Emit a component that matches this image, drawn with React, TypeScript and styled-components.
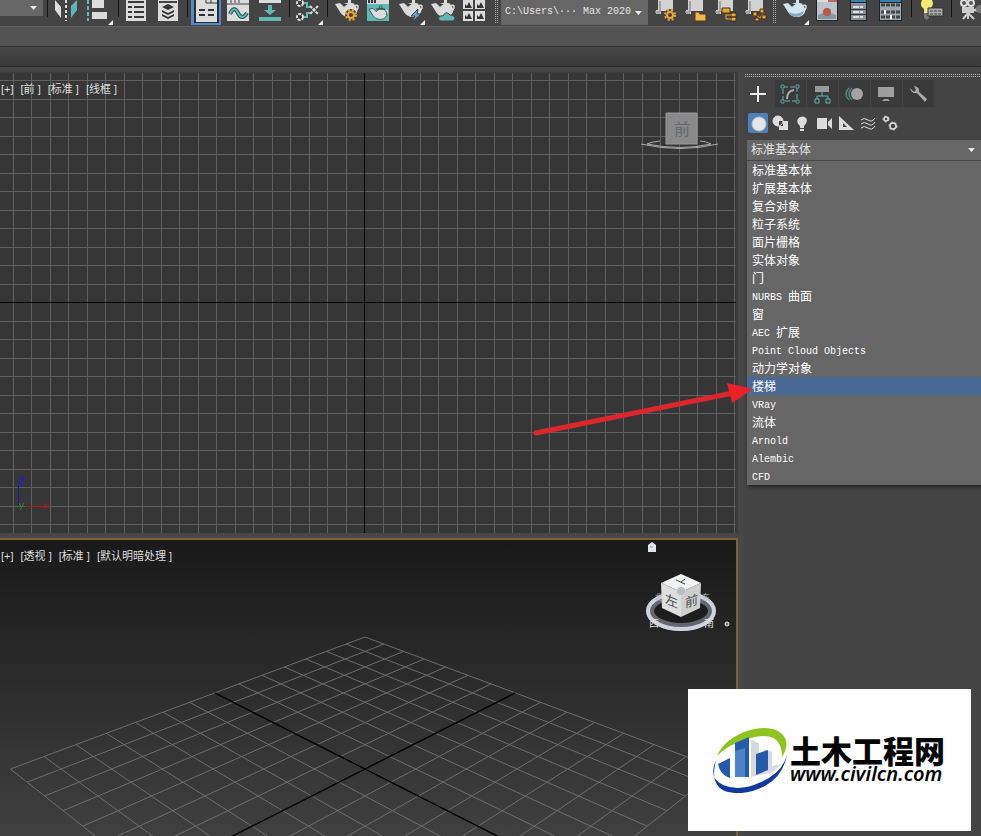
import React from 'react';
import styled, { createGlobalStyle } from 'styled-components';

const CJK = '"Noto Sans CJK SC", sans-serif';
const LIGHT = '#dcdcdc';
const TEAL = '#5fb8b4';
const GOLD = '#e8a838';

const Global = createGlobalStyle`
  *, *::before, *::after { box-sizing: border-box; }
  body { margin: 0; background: #444; color: #e4e4e4; font: 12px/18px "Liberation Sans", ${CJK}; overflow: hidden; }
  button, select { font: inherit; color: inherit; border: 0; margin: 0; padding: 0; background: none; border-radius: 0; }
  svg { display: block; }
`;

const Shell = styled.div`
  display: flex;
  flex-direction: column;
  height: 100vh;
  position: relative;
  overflow: hidden;
`;

const Toolbar = styled.header`
  display: flex;
  height: 26px;
  background: #444;
  overflow: hidden;
`;

const Tool = styled.button<{ $w: number }>`
  flex: 0 0 ${(p) => p.$w}px;
  height: 26px;
`;

const Separator = styled.span<{ $w: number }>`
  flex: 0 0 ${(p) => p.$w}px;
  display: flex;
  justify-content: center;
  &::before { content: ''; width: 1px; height: 17px; background: #151515; }
`;

const Grip = styled.span<{ $w: number }>`
  flex: 0 0 ${(p) => p.$w}px;
  display: flex;
  justify-content: center;
  &::before {
    content: '';
    width: 4px;
    height: 24px;
    background: conic-gradient(#a8a8a8 25%, transparent 0) 0 0 / 2px 2px;
  }
`;

const Combo = styled.label<{ $w?: number; $h: number; $mono?: boolean }>`
  position: relative;
  display: block;
  flex: ${(p) => (p.$w ? `0 0 ${p.$w}px` : '1 1 auto')};
  height: ${(p) => p.$h}px;
  background: #666;
  select {
    appearance: none;
    width: 100%;
    height: 100%;
    padding: 0 14px 2px 4px;
    outline: none;
    font-family: ${(p) => (p.$mono ? `"Liberation Mono", ${CJK}` : CJK)};
    font-size: ${(p) => (p.$mono ? 10 : 12)}px;
  }
  svg { position: absolute; right: 6px; top: calc(50% - 3px); pointer-events: none; }
`;

const Ribbon = styled.div`
  height: 21px;
  background: #535353;
  border-top: 1px solid #626262;
  border-bottom: 1px solid #2e2e2e;
`;
const SubRibbon = styled.div`
  height: 20px;
  background: linear-gradient(#474747, #3b3b3b);
  border-bottom: 1px solid #282828;
`;

const Workspace = styled.main`
  flex: 1;
  min-height: 0;
  display: grid;
  grid-template-columns: minmax(0, 1fr) 238px;
  column-gap: 5px;
  padding-top: 5px;
  background: #474747;
`;

const Views = styled.div`
  display: flex;
  flex-direction: column;
  gap: 5px;
  min-height: 0;
`;

const View = styled.section<{ $active?: boolean }>`
  position: relative;
  flex: ${(p) => (p.$active ? '1 1 0' : '0 0 461px')};
  min-height: 0;
  overflow: hidden;
  background: ${(p) => (p.$active ? 'linear-gradient(#191919, #404040)' : '#363636')};
  border-right: 2px solid ${(p) => (p.$active ? '#7c6132' : '#3c3c3c')};
  border-top: ${(p) => (p.$active ? '2px solid #7c6132' : '1px solid #3c3c3c')};
  > svg { width: 100%; height: 100%; }
`;

const ViewLabels = styled.nav`
  position: absolute;
  top: 7px;
  left: 1px;
  display: flex;
  gap: 7px;
  button { font: 11px/18px "Liberation Sans", ${CJK}; white-space: pre; color: #ddd; }
`;

const Cube = styled.div`
  position: absolute;
  top: 0;
  right: 0;
`;

const Panel = styled.aside`
  background: #444;
  display: flex;
  flex-direction: column;
  min-width: 0;
`;

const PanelGrip = styled.div`
  height: 4px;
  margin: 2px 0 2px 1px;
  background: conic-gradient(#b8b8b8 25%, transparent 0) 0 0 / 2px 2px;
`;

const Tabs = styled.div`
  display: flex;
  gap: 1px;
  height: 28px;
`;

const Tab = styled.button<{ $on?: boolean }>`
  width: 31px;
  height: 27px;
  background: ${(p) => (p.$on ? '#444' : '#3a3a3a')};
  display: grid;
  place-items: center;
`;

const Categories = styled.div`
  display: flex;
  gap: 2px;
  padding: 5px 0 0 5px;
  height: 32px;
`;

const Category = styled.button<{ $on?: boolean }>`
  width: 20px;
  height: 20px;
  border-radius: 2px;
  background: ${(p) => (p.$on ? '#5080b8' : 'transparent')};
`;

const Picker = styled.div`
  position: relative;
  display: flex;
  margin-left: 4px;
  border-bottom: 1px solid #484848;
`;

const Menu = styled.ul`
  position: absolute;
  z-index: 2;
  top: 100%;
  left: 0;
  right: 0;
  margin: 1px 0 0;
  padding: 0;
  list-style: none;
  background: #666;
  box-shadow: 1px 2px 3px #222;
`;

const MenuItem = styled.li<{ $on?: boolean }>`
  position: relative;
  background: ${(p) => (p.$on ? '#486a94' : 'transparent')};
  button {
    display: block;
    width: 100%;
    height: 18px;
    padding-left: 5px;
    text-align: left;
    font: 12px/18px ${CJK};
    color: #fff;
    white-space: pre;
  }
`;

const Latin = styled.span`
  font: 10px/14px "Liberation Mono", monospace;
  vertical-align: 1px;
`;

const Pointer = styled.svg`
  position: absolute;
  right: calc(100% - 8px);
  top: 0;
  pointer-events: none;
`;

const Watermark = styled.a`
  position: absolute;
  z-index: 3;
  right: 10px;
  bottom: 5px;
  width: 283px;
  height: 142px;
  display: flex;
  align-items: center;
  padding-left: 25px;
  gap: 2px;
  background: #fff;
  color: #050505;
  text-decoration: none;
`;

const Brand = styled.span`
  display: flex;
  flex-direction: column;
  strong { font: 900 31px/28px ${CJK}; white-space: nowrap; }
  em { font: italic 600 20px/20px "Noto Sans", sans-serif; }
`;

const Chevron = () => (
  <svg width="7" height="6"><path d="M0 1h7L3.500 5z" fill="#eee" /></svg>
);

const Teapot = ({ x = 0, y = 0, fill = LIGHT, stroke = 'none' }: { x?: number; y?: number; fill?: string; stroke?: string }) => (
  <g transform={`translate(${x} ${y})`} stroke={stroke}>
    <path d="M19 6q5-2 4 2-1 3-4 4" fill="none" stroke={fill} strokeWidth="1.500" />
    <path d="M0 4l5-1 4 4q2-2 4-3h6q4 4 3 8-2 5-8 5-6 0-9-5z" fill={fill} />
    <path d="M9 4q5-3 11 0zM13 0h3v3h-3z" fill={fill} />
  </g>
);

const Corner = ({ x = 28 }: { x?: number }) => <path d={`M${x} 20v5h-5z`} fill="#eee" />;

const Gear = ({ x, y, r = 4, color = GOLD }: { x: number; y: number; r?: number; color?: string }) => (
  <g fill="none" stroke={color}>
    <circle cx={x} cy={y} r={r + 1} strokeWidth="2" strokeDasharray="2 2" />
    <circle cx={x} cy={y} r={r - 1} strokeWidth="2" />
  </g>
);

const Cog = ({ x, y, r }: { x: number; y: number; r: number }) => (
  <g fill="none" stroke="#ddd">
    <circle cx={x} cy={y} r={r} strokeWidth="1.500" />
    <circle cx={x} cy={y} r={r + 1} strokeWidth="1" strokeDasharray="2 2" />
  </g>
);

const Scroll = () => (
  <g>
    <path d="M8 0h15v11H11v3H6v-4h2z" fill="#d2d2d2" />
    <path d="M5 11h5v3H7q-2-1-2-3z" fill="#a6a6a6" />
    <path d="M10 1v11" stroke="#777" />
  </g>
);

type ToolDef = { k: string; w: number; label?: string; art?: React.ReactNode };

const TOOLS_LEFT: ToolDef[] = [
  { k: 'sep', w: 9 },
  { k: 'tool', w: 32, label: '镜像', art: <><path d="M3 0l6 7v11L3 10z" fill="#ddd" /><path d="M25 0v10l-6 8V6z" fill={TEAL} /><path d="M14 0v21" stroke="#ddd" strokeWidth="2" strokeDasharray="3 2" /></> },
  { k: 'tool', w: 30, label: '对齐', art: <><path d="M4 0v21" stroke={TEAL} strokeWidth="2" strokeDasharray="4 2" /><path d="M8 0h12v8H8zM8 12h15v7H8z" fill={LIGHT} /><Corner x={29} /></> },
  { k: 'sep', w: 8 },
  { k: 'tool', w: 32, label: '场景资源管理器', art: <><path d="M4 0h20v21H4z" fill={LIGHT} /><path d="M6 2h16M6 7h4m2 0h10M6 12h4m2 0h10M6 17h4m2 0h10" stroke="#383838" strokeWidth="2" /></> },
  { k: 'tool', w: 30, label: '层资源管理器', art: <><path d="M4 0h20v21H4z" fill={LIGHT} /><path d="M5 2h18" stroke="#444" strokeWidth="2" /><path d="M8 7l6-3 6 3-6 3zM8 10l6 3 6-3v2l-6 3-6-3zM8 14l6 3 6-3v2l-6 3-6-3z" fill="#333" /></> },
  { k: 'sep', w: 6 },
  { k: 'tool', w: 32, label: '功能区', art: <><path d="M1 0h30v25H1z" fill="#5789bd" /><path d="M4 0h25v23H4z" fill="#26303b" /><path d="M6 0h21v22H6z" fill={LIGHT} /><path d="M16 0v3h11M21 0v3" stroke="#333" fill="none" /><path d="M9 10h6m3 0h6M9 15h6m3 0h6" stroke="#333" strokeWidth="2" /></> },
  { k: 'tool', w: 32, label: '曲线编辑器', art: <><path d="M5 0h22v21H5z" fill={LIGHT} /><path d="M5 4h22M9 0v3m4-3v3m4-3v3" stroke="#444" strokeWidth="1" /><path d="M8 14q4-9 8-1t9 0" fill="none" stroke="#28504f" strokeWidth="4" /><path d="M8 14q4-9 8-1t9 0" fill="none" stroke={TEAL} strokeWidth="2" /></> },
  { k: 'tool', w: 32, label: '展开', art: <><path d="M5 0h22v3H5z" fill={LIGHT} /><path d="M5 17h22v4H5zM14 5h4v5h4l-6 5-6-5h4z" fill={TEAL} /></> },
  { k: 'sep', w: 6 },
  { k: 'tool', w: 32, label: '图解视图', art: <><path d="M9 3h6v4h5M9 17h6v-4h5" fill="none" stroke={TEAL} strokeWidth="2" /><g fill="#333" stroke="#ddd" strokeWidth="2" strokeDasharray="3 1"><circle cx="8" cy="3" r="3" /><circle cx="8" cy="17" r="3" /></g><path d="M18 6l8 8m0-8l-8 8" stroke="#ddd" strokeWidth="2" strokeDasharray="3 1" /><Corner x={31} /></> },
  { k: 'sep', w: 6 },
  { k: 'tool', w: 32, label: '渲染设置', art: <><Teapot x={5} /><circle cx="21" cy="15" r="6" fill="#444" /><Gear x={21} y={15} /></> },
  { k: 'tool', w: 32, label: '渲染帧窗口', art: <><path d="M5 0h22v21H5z" fill={TEAL} /><path d="M5 0h22v4H5z" fill={LIGHT} /><path d="M7 0v3m3-3v3m3-3v3" stroke="#333" strokeWidth="2" /><g transform="translate(7 6) scale(.8)"><Teapot stroke="#25494a" /></g></> },
  { k: 'tool', w: 32, label: '渲染产品', art: <><Teapot x={5} /><path d="M24 9l-7 7h4l-3 6 9-8h-4z" fill="#6aa6d6" stroke="#444" /><Corner x={31} /></> },
  { k: 'tool', w: 32, label: '云渲染', art: <><Teapot x={5} /><path d="M15 21q-4-1-2-4 2-2 4-1 3-6 7-1 5 0 5 4-1 2-3 2z" fill={TEAL} stroke="#444" /></> },
  { k: 'tool', w: 32, label: '渲染库', art: <><path d="M5 0h10v9H5zM17 0h10v9H17zM5 11h10v10H5zM17 11h10v10H17z" fill={LIGHT} /><path d="M7 8V4l2 2 2-4 3 6zM19 8V4l2 2 2-4 3 6zM7 19v-4l2 2 2-4 3 6zM19 19v-4l2 2 2-4 3 6z" fill="#333" /></> },
  { k: 'grip', w: 11 },
];

const TOOLS_RIGHT: ToolDef[] = [
  { k: 'gap', w: 2 },
  { k: 'tool', w: 30, label: '项目设置', art: <><Scroll /><circle cx="20" cy="15" r="6" fill="#444" /><Gear x={20} y={15} /></> },
  { k: 'tool', w: 30, label: '打开项目文件夹', art: <><Scroll /><path d="M15 12h4l1 2h6v7H15z" fill="#f2b44c" stroke="#553b13" /></> },
  { k: 'tool', w: 30, label: '项目结构', art: <><Scroll /><path d="M12 8h8v5h-8zM21 13h5v4h-5zM21 17h5v4h-5z" fill={GOLD} stroke="#49340f" /><path d="M16 14v5h5m-5-4h5" fill="none" stroke={GOLD} strokeWidth="1" /></> },
  { k: 'tool', w: 30, label: '项目节点', art: <><Scroll /><path d="M15 14l5 4m0 0l4-6m-4 6" stroke={GOLD} strokeWidth="1" /><path d="M13 12h4v4h-4zM20 9h4v4h-4zM22 15h4v4h-4zM15 18h4v3h-4z" fill={GOLD} stroke="#49340f" /></> },
  { k: 'grip', w: 8 },
  { k: 'tool', w: 32, label: '茶壶渲染', art: <><Teapot x={5} fill="#d4e4f1" /><path d="M11 12q7 4 15-1-1 5-7 6-6 0-8-5z" fill="#8aa9c6" /><Corner x={31} /></> },
  { k: 'tool', w: 32, label: '渲染窗口', art: <><path d="M6 0h22v21H6z" fill="#222" /><path d="M7 0h20v20H7z" fill="#bac4ca" /><path d="M7 0h20v2H7z" fill="#ddd" /><path d="M8 15q9-5 18 0v4H8z" fill="#8697a4" /><circle cx="17" cy="12" r="4" fill="#b8584c" /><path d="M18 0h9v2h-9z" fill="#bc6b60" /></> },
  { k: 'tool', w: 32, label: '列表', art: <><path d="M8 0h17v21H8z" fill="#1f2427" /><path d="M9 0h15v2H9z" fill="#3782ad" /><path d="M9 3h15v17H9z" fill="#879098" /><path d="M11 7h10M11 12h10M11 17h10" stroke="#dce0e3" strokeWidth="2" strokeDasharray="6 1" /><path d="M9 9.500h15M9 14.500h15" stroke="#353c40" /></> },
  { k: 'tool', w: 32, label: '控制器', art: <><path d="M5 0h23v21H5z" fill="#1f2427" /><path d="M6 0h21v2H6z" fill="#3782ad" /><path d="M6 3h21v17H6z" fill="#a1a7ab" /><path d="M7 5h19M7 12h19M7 17h19" stroke="#40484d" strokeWidth="3" strokeDasharray="4 1" /><path d="M11 10v4m6 1v4" stroke="#fff" strokeWidth="2" /></> },
  { k: 'sep', w: 10 },
  { k: 'tool', w: 32, label: '灯光', art: <><path d="M6 0h10q3 6-3 9v4H8V9Q3 6 6 0z" fill="#f2e875" /><path d="M8 13h5v5l-2 2-3-2z" fill="#777" /><path d="M12 8h15v8H12z" fill="#aaa" stroke="#333" /><path d="M14 11h11m-11 3h11" stroke="#444" strokeDasharray="3 1" /></> },
  { k: 'sep', w: 6 },
  { k: 'tool', w: 32, label: '摄影机', art: <><circle cx="10" cy="3" r="3" fill="#555" stroke="#ddd" strokeWidth="2" /><circle cx="17" cy="3" r="3" fill="#555" stroke="#ddd" strokeWidth="2" /><path d="M8 7h12v6H8zM20 9l4-1v4l-4-1z" fill="#ccc" /><path d="M14 13l-5 6m5-6v6m0-6l6 6" stroke="#ccc" strokeWidth="2" /><circle cx="26" cy="9" r="4" fill="#777" /></> },
];

const ToolStrip = ({ items }: { items: ToolDef[] }) => (
  <>
    {items.map((t, i) => {
      if (t.k === 'sep') return <Separator key={i} $w={t.w} />;
      if (t.k === 'grip') return <Grip key={i} $w={t.w} />;
      if (t.k === 'gap') return <Tool as="span" key={i} $w={t.w} />;
      return <Tool key={i} $w={t.w} aria-label={t.label}><svg width={t.w} height="26">{t.art}</svg></Tool>;
    })}
  </>
);

const range = (a: number, b: number) => Array.from({ length: b - a + 1 }, (_, i) => a + i);

const OrthoGrid = () => (
  <svg viewBox="0 0 736 460" preserveAspectRatio="xMidYMid slice">
    <g stroke="#606060" shapeRendering="crispEdges">
      {range(-19, 20).map((i) => <path key={`v${i}`} d={`M${Math.round(364 + i * 18.5) + 0.5} 0V460`} />)}
      {range(-12, 12).map((i) => <path key={`h${i}`} d={`M0 ${Math.round(229 + i * 18.5) + 0.5}H736`} />)}
    </g>
    <path d="M364.500 0V460M0 229.500H736" stroke="#050505" shapeRendering="crispEdges" />
    <g fill="none">
      <path d="M18.500 411V433" stroke="#1c1c94" />
      <path d="M19 405h5l-5 6h5" stroke="#2222c0" strokeWidth="1.500" />
      <path d="M25 433.500h25M44 431l5 2-5 2" stroke="#a02020" />
      <path d="M19 430l2 4m3-4l-4 7" stroke="#279027" strokeWidth="1" />
    </g>
  </svg>
);

const project = (u: number, v: number) => {
  const w = 1 - 0.0257 * (u + v);
  return `${(365 + (25.33 * (u - v)) / w).toFixed(1)} ${(499 / w - 270).toFixed(1)}`;
};

const PerspectiveGrid = () => (
  <svg viewBox="0 0 736 296" preserveAspectRatio="xMidYMin slice">
    <g stroke="#6c6c6c" strokeWidth="1">
      {range(-7, 7).map((i) => <path key={i} d={`M${project(i, -7)}L${project(i, 7)}M${project(-7, i)}L${project(7, i)}`} />)}
    </g>
    <path d={`M${project(0, -7)}L${project(0, 7)}M${project(-7, 0)}L${project(7, 0)}`} stroke="#000" strokeWidth="1.500" />
  </svg>
);

const FrontCube = () => (
  <svg width="100" height="90">
    <path d="M5 71q39 9 77 0M24 68q-9 1-13 3 34 7 64 0-6-3-11-3" fill="none" stroke="#aaa" strokeWidth="1" />
    <path d="M30 40h31v31H30z" fill="#898989" stroke="#999" />
    <text x="38" y="62" fontSize="16" fill="#5f6970" fontFamily="Noto Sans CJK SC">前</text>
  </svg>
);

const OrbitCube = () => (
  <svg width="100" height="100">
    <path d="M12 5l4-3 4 3v7h-8z" fill="#e2e6f0" />
    <path d="M14 7h3" stroke="#899" />
    <ellipse cx="45" cy="71" rx="31" ry="16" fill="#1d1d1d" stroke="#64666e" strokeWidth="8" />
    <ellipse cx="45" cy="71" rx="33" ry="18" fill="none" stroke="#ced2df" strokeWidth="4" />
    <path d="M25 43l20-9 20 9-20 9z" fill="#f2f2f2" />
    <path d="M25 43l20 9v25l-19-9z" fill="#dedede" />
    <path d="M65 43l-20 9v25l19-9z" fill="#cecece" />
    <circle cx="45" cy="51" r="4" fill="#babcc8" />
    <path d="M40 40l9 4m-4-2l4-3" stroke="#444" strokeWidth="1" />
    <g fill="#505050" fontFamily="Noto Sans CJK SC" fontSize="13">
      <text transform="matrix(1 .4 0 1 29 63)">左</text>
      <text transform="matrix(1 -.35 0 1 49 68)">前</text>
      <text x="13" y="87" fontSize="10" fill="#ddd">西</text>
      <text x="68" y="87" fontSize="10" fill="#ddd">南</text>
      <text x="19" y="60" fontSize="8" fill="#bbb">北</text>
      <text x="66" y="60" fontSize="8" fill="#bbb">东</text>
    </g>
    <circle cx="91" cy="84" r="2" fill="#777" stroke="#eee" />
  </svg>
);

const TABS: [string, React.ReactNode][] = [
  ['创建', <path d="M15 6v16M7 14h16" stroke="#eee" strokeWidth="2" />],
  ['修改', <><rect x="8" y="7" width="14" height="14" fill="none" stroke={TEAL} strokeDasharray="5 2" /><path d="M6 5h3v3H6zM21 5h3v3h-3zM6 20h3v3H6zM21 20h3v3h-3z" fill="#3a3a3a" stroke="#5a9b90" /><path d="M12 19q0-8 7-9" fill="none" stroke="#aaa" strokeWidth="2" /></>],
  ['层次', <><path d="M8 6h14v6H8z" fill="#999" /><path d="M15 12v4M10 19v-3h11v3" fill="none" stroke={TEAL} /><path d="M8 19h4v4H8zM19 19h4v4h-4z" fill="none" stroke={TEAL} /></>],
  ['运动', <><path d="M10 8q-6 6 0 12M13 8q-6 6 0 12" fill="none" stroke="#4d8c80" strokeWidth="1.500" /><circle cx="18" cy="14" r="6" fill="#a3a3a3" /></>],
  ['显示', <><path d="M7 7h16v10H7z" fill="#9e9e9e" /><path d="M11 21l2-2h4l2 2z" fill="#9e9e9e" /></>],
  ['实用程序', <path d="M7 8q1 6 7 5l8 9 2-3-8-7q1-5-5-6l2 4-2 2z" fill="#aaa" />],
];

const CATEGORIES: [string, React.ReactNode][] = [
  ['几何体', <circle cx="11" cy="11" r="7" fill="#e6e6e6" stroke="#c0c0c0" />],
  ['图形', <><circle cx="8" cy="8" r="5" fill="#ddd" /><path d="M9 8h9v9H9z" fill="#ddd" /><path d="M9 8h4v5H9z" fill="#444" /><circle cx="8" cy="8" r="5" fill="none" stroke="#ddd" /></>],
  ['灯光', <path d="M7 12q-4-5 1-8 5-2 7 3 0 3-3 6v2H8v-2zM8 16h4v2H8z" fill="#ddd" />],
  ['摄影机', <path d="M3 5h10v11H3zM14 9l4-4v11l-4-4z" fill="#ddd" />],
  ['辅助对象', <path fillRule="evenodd" d="M3 3l15 14H3zM7 10v4h4z" fill="#ddd" />],
  ['空间扭曲', <path d="M3 7q3-3 7 0t7-2M3 11q3-3 7 0t7-2M3 15q3-3 7 0t7-2" fill="none" stroke="#ddd" strokeWidth="1" />],
  ['系统', <><Cog x={6} y={6} r={2} /><Cog x={13} y={13} r={3} /></>],
];

const OPTIONS = ['标准基本体', '扩展基本体', '复合对象', '粒子系统', '面片栅格', '实体对象', '门', 'NURBS 曲面', '窗', 'AEC 扩展', 'Point Cloud Objects', '动力学对象', '楼梯', 'VRay', '流体', 'Arnold', 'Alembic', 'CFD'];

const Mixed = ({ text }: { text: string }) => (
  <>{text.split(/([\x20-\x7e]+)/).filter(Boolean).map((part, i) => (/^[\x20-\x7e]/.test(part) ? <Latin key={i}>{part}</Latin> : part))}</>
);

const Labels = ({ items }: { items: string[] }) => (
  <ViewLabels>{items.map((s) => <button key={s}>{s}</button>)}</ViewLabels>
);

export default function App() {
  return (
    <Shell>
      <Global />
      <Toolbar>
        <Combo $w={43} $h={16}><select aria-label="选择集" /><Chevron /></Combo>
        <ToolStrip items={TOOLS_LEFT} />
        <Combo $w={147} $h={25} $mono>
          <select aria-label="项目路径"><option>{'C:\\Users\\··· Max 2020'}</option></select>
          <Chevron />
        </Combo>
        <ToolStrip items={TOOLS_RIGHT} />
      </Toolbar>
      <Ribbon />
      <SubRibbon />
      <Workspace>
        <Views>
          <View>
            <OrthoGrid />
            <Labels items={['[+]', '[前 ]', '[标准 ]', '[线框 ]']} />
            <Cube><FrontCube /></Cube>
          </View>
          <View $active>
            <PerspectiveGrid />
            <Labels items={['[+]', '[透视 ]', '[标准 ]', '[默认明暗处理 ]']} />
            <Cube><OrbitCube /></Cube>
          </View>
        </Views>
        <Panel>
          <PanelGrip />
          <Tabs role="tablist">
            {TABS.map(([name, art], i) => (
              <Tab key={name} role="tab" aria-label={name} aria-selected={i === 0} $on={i === 0}>
                <svg width="31" height="27">{art}</svg>
              </Tab>
            ))}
          </Tabs>
          <Categories>
            {CATEGORIES.map(([name, art], i) => (
              <Category key={name} aria-label={name} $on={i === 0}><svg width="20" height="20">{art}</svg></Category>
            ))}
          </Categories>
          <Picker>
            <Combo $h={20}>
              <select aria-label="对象类别">{OPTIONS.map((o) => <option key={o}>{o}</option>)}</select>
              <Chevron />
            </Combo>
            <Menu>
              {OPTIONS.map((o) => (
                <MenuItem key={o} $on={o === '楼梯'}>
                  <button><Mixed text={o} /></button>
                  {o === '楼梯' && (
                    <Pointer width="222" height="64">
                      <path d="M3 56L200 16" stroke="#d9272b" strokeWidth="5" strokeLinecap="round" />
                      <path d="M194 6l26 6-21 14z" fill="#ee2027" />
                    </Pointer>
                  )}
                </MenuItem>
              ))}
            </Menu>
          </Picker>
        </Panel>
      </Workspace>
      <Watermark href="#civilcn">
        <svg width="75" height="66">
          <path d="M4 29Q10 14 31 5q27-9 38 2 9 9 0 23 0-13-7-18-9-6-28 0Q14 18 4 29z" fill="#8fc31f" />
          <path d="M38 50V13l8 3v14l5-2v-6l8 3v14l9-2-8 8z" fill="#d7dadd" />
          <path d="M3 33Q-5 51 10 58q17 7 38-3 21-9 26-27-4 21-22 31-20 10-37 6Q-4 60 3 33z" fill="#12399c" />
          <path d="M5 37l12-6v20Q7 48 5 37zM22 16l14-6v40H22zM43 27l12-4v20l-12 5z" fill="#2559ac" />
          <path d="M22 24l10-3v29H22z" fill="#4d83c4" />
        </svg>
        <Brand><strong>土木工程网</strong><em>www.civilcn.com</em></Brand>
      </Watermark>
    </Shell>
  );
}
